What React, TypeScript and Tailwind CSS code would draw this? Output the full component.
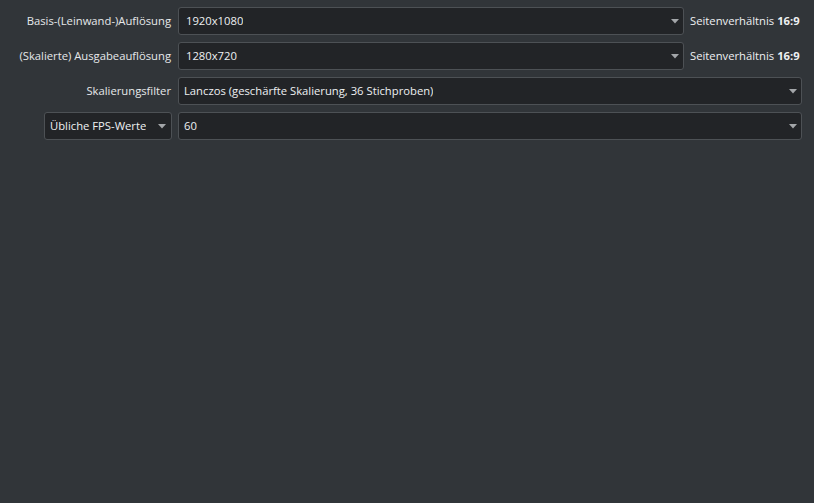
import React from 'react';

function Arrow() {
    return (
        <svg width="8" height="5" viewBox="0 0 8 5" className="shrink-0">
            <path d="M0 0 L8 0 L4 4.5 Z" fill="#a3a6a9" />
        </svg>
    );
}

function Combo({ value, editable, className = '' }: { value: string; editable?: boolean; className?: string }) {
    return (
        <div
            className={`h-[28px] flex items-center justify-between rounded-[3px] border border-[#4d5155] bg-[#222427] text-[#eef0f2] ${editable ? 'pl-[7px]' : 'pl-[5px]'} pr-[4px] ${className}`}
        >
            <span className="truncate">{value}</span>
            <Arrow />
        </div>
    );
}

function Aspect() {
    return (
        <div className="w-[118px] shrink-0 pl-[6px] text-[#eef0f2] whitespace-nowrap">
            Seitenverhältnis <span className="font-bold">16:9</span>
        </div>
    );
}

export default function App() {
    return (
        <div
            className="w-full h-[503px] bg-[#313539] text-[11.25px] pt-[7px] pr-[12px] flex flex-col gap-[7px]"
            style={{ fontFamily: '"Open Sans", "Noto Sans", sans-serif' }}
        >
            <div className="flex items-center">
                <div className="w-[172px] shrink-0 pr-[1px] text-right text-[#e6e8ea]">Basis-(Leinwand-)Auflösung</div>
                <Combo value="1920x1080" editable className="ml-[6px] flex-1" />
                <Aspect />
            </div>
            <div className="flex items-center">
                <div className="w-[172px] shrink-0 pr-[1px] text-right text-[#e6e8ea]">(Skalierte) Ausgabeauflösung</div>
                <Combo value="1280x720" editable className="ml-[6px] flex-1" />
                <Aspect />
            </div>
            <div className="flex items-center">
                <div className="w-[172px] shrink-0 pr-[1px] text-right text-[#e6e8ea]">Skalierungsfilter</div>
                <Combo value="Lanczos (geschärfte Skalierung, 36 Stichproben)" className="ml-[6px] flex-1" />
            </div>
            <div className="flex items-center">
                <div className="w-[172px] shrink-0 flex justify-end">
                    <Combo value="Übliche FPS-Werte" className="w-[128px] !pl-[5px] !pr-[5px]" />
                </div>
                <Combo value="60" className="ml-[6px] flex-1" />
            </div>
        </div>
    );
}
